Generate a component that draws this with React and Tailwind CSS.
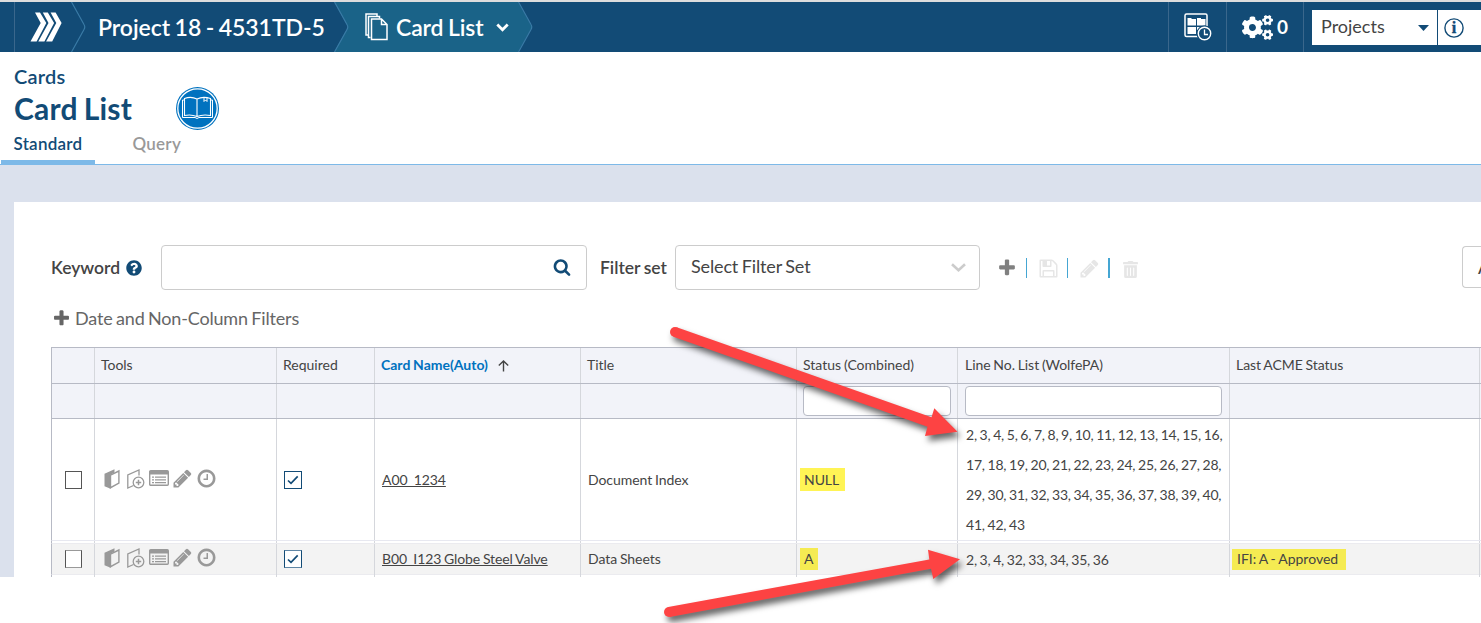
import React, { useState } from 'react';
import { FaCogs, FaQuestionCircle, FaTrashAlt } from 'react-icons/fa';

const COLS = 'grid grid-cols-[43px_182px_98px_206px_216px_161px_272px_250px]';

const ROWS = [
  {
    id: 'A00_1234',
    name: 'A00_1234',
    title: 'Document Index',
    status: 'NULL',
    lines: '2, 3, 4, 5, 6, 7, 8, 9, 10, 11, 12, 13, 14, 15, 16, 17, 18, 19, 20, 21, 22, 23, 24, 25, 26, 27, 28, 29, 30, 31, 32, 33, 34, 35, 36, 37, 38, 39, 40, 41, 42, 43',
    last: '',
  },
  {
    id: 'B00_I123',
    name: 'B00_I123 Globe Steel Valve',
    title: 'Data Sheets',
    status: 'A',
    lines: '2, 3, 4, 32, 33, 34, 35, 36',
    last: 'IFI: A - Approved',
  },
];

const GLYPHS = {
  plus: 'M1600 736v192q0 40-28 68t-68 28h-416v416q0 40-28 68t-68 28h-192q-40 0-68-28t-28-68v-416h-416q-40 0-68-28t-28-68v-192q0-40 28-68t68-28h416v-416q0-40 28-68t68-28h192q40 0 68 28t28 68v416h416q40 0 68 28t28 68z',
  search: 'M1216 832q0-185-131.5-316.5t-316.5-131.5-316.5 131.5-131.5 316.5 131.5 316.5 316.5 131.5 316.5-131.5 131.5-316.5zm512 832q0 52-38 90t-90 38q-54 0-90-38l-343-342q-179 124-399 124-143 0-273.5-55.5t-225-150-150-225-55.5-273.5 55.5-273.5 150-225 225-150 273.5-55.5 273.5 55.5 225 150 150 225 55.5 273.5q0 220-124 399l343 343q37 37 37 90z',
  save: 'M512 1536h768v-384h-768v384zm896 0h128v-896q0-14-10-38.5t-20-34.5l-281-281q-10-10-34-20t-39-10v416q0 40-28 68t-68 28h-576q-40 0-68-28t-28-68v-416h-128v1280h128v-416q0-40 28-68t68-28h832q40 0 68 28t28 68v416zm-384-928v-320q0-13-9.5-22.5t-22.5-9.5h-192q-13 0-22.5 9.5t-9.5 22.5v320q0 13 9.5 22.5t22.5 9.5h192q13 0 22.5-9.5t9.5-22.5zm640 32v928q0 40-28 68t-68 28h-1344q-40 0-68-28t-28-68v-1344q0-40 28-68t68-28h928q40 0 88 20t76 48l280 280q28 28 48 76t20 88z',
  pencil: 'M491 1536l91-91-235-235-91 91v107h128v128h107zm523-928q0-22-22-22-10 0-17 7l-542 542q-7 7-7 17 0 22 22 22 10 0 17-7l542-542q7-7 7-17zm-54-192l416 416-832 832h-416v-416zm683 96q0 53-37 90l-166 166-416-416 166-165q36-38 90-38 53 0 91 38l235 234q37 39 37 91z',
  clock: 'M1024 544v448q0 14-9 23t-23 9h-320q-14 0-23-9t-9-23v-64q0-14 9-23t23-9h224v-352q0-14 9-23t23-9h64q14 0 23 9t9 23zm416 352q0-148-73-273t-198-198-273-73-273 73-198 198-73 273 73 273 198 198 273 73 273-73 198-198 73-273zm224 0q0 209-103 385.5t-279.5 279.5-385.5 103-385.5-103-279.5-279.5-103-385.5 103-385.5 279.5-279.5 385.5-103 385.5 103 279.5 279.5 103 385.5z',
};

function Glyph({ name, className }) {
  return (
    <svg viewBox="0 0 1792 1792" fill="currentColor" className={className}>
      <path d={GLYPHS[name]} />
    </svg>
  );
}

// Breadcrumb separator, left/right are the fills on either side of the point
function Crumb({ left, right }) {
  return (
    <svg width="15" height="50" viewBox="0 0 15 50" className="shrink-0">
      <rect width="15" height="50" fill={right} />
      <path d="M0 0L14 25L0 50z" fill={left} />
      <path d="M0.5 0L13 22.5Q14.5 25 13 27.5L0.5 50" fill="none" stroke="#3a7ba6" strokeWidth="1.2" />
    </svg>
  );
}

function TopBar() {
  return (
    <header className="flex h-[50px] shrink-0 bg-[#124b76] text-white">
      <div className="ml-[14px] flex w-[57px] items-center border-l border-[#3a678c] pl-[15px]">
        <svg width="32" height="30" viewBox="0 0 32 30" fill="#fff">
          <path d="M5 0.5h5l6.3 10.5l-9.7 18.5h-6.1l10.2-18.5z" />
          <path d="M12.8 0.5h5l6.3 10.5l-9.7 18.5h-6.1l10.2-18.5z" />
          <path d="M20.6 0.5h5l6 10.5l-9.4 18.5h-6.1l10.2-18.5z" />
        </svg>
      </div>
      <Crumb left="#124b76" right="#124b76" />
      <div className="flex w-[248px] items-center pt-px pl-[12px] text-[23px] font-semibold tracking-[-0.05px] whitespace-nowrap">Project 18 - 4531TD-5</div>
      <Crumb left="#124b76" right="#1a6388" />
      <div className="flex w-[169px] items-center bg-[#1a6388] pl-[16px] text-[23px] font-semibold tracking-[-0.12px] whitespace-nowrap">
        <svg width="23" height="28" viewBox="0 0 23 28" fill="none" stroke="#fff" strokeWidth="1.5" className="shrink-0">
          <path d="M3 22H1V1H12V3M5.500 24.500H3.500V3.500H14.500V5.500" />
          <path d="M6.500 6H16.500L22 11.500V26.500H6.500zM16.500 6V11.500H22" />
        </svg>
        <span className="w-[100px] shrink-0 pt-px pl-[8px]">Card List</span>
        <svg width="13" height="9" viewBox="0 0 13 9" fill="none" stroke="#fff" strokeWidth="2.800" className="ml-[8px] shrink-0">
          <path d="M1.300 1.500L6.500 6.700L11.700 1.500" />
        </svg>
      </div>
      <Crumb left="#1a6388" right="#124b76" />
      <div className="ml-auto flex w-[58px] shrink-0 items-center border-l border-[#3a678c] pl-[15px]">
        <svg width="28" height="28" viewBox="0 0 28 28" fill="none">
          <rect x="1" y="1" width="22" height="22.500" rx="1.500" stroke="#fff" strokeWidth="1.500" />
          <path d="M3.500 5h4v1h4.500v6.500H3.500zM13 5h4v1h4.500v6.500H13zM3.500 14h8.500v7H3.500zM13 14h8.500v3H13z" fill="#fff" />
          <circle cx="20.500" cy="20.500" r="8" fill="#124b76" />
          <circle cx="20.500" cy="20.500" r="6.200" stroke="#fff" strokeWidth="1.400" />
          <path d="M20.500 16.500V21.500H24" stroke="#fff" strokeWidth="1.300" />
        </svg>
      </div>
      <div className="flex w-[77px] shrink-0 items-center border-l border-[#3a678c] pl-[15px] text-[19px] font-bold">
        <FaCogs className="h-[31px] w-[31px]" />
        <span className="ml-[4px] pt-px">0</span>
      </div>
      <div className="flex w-[178px] shrink-0 border-l border-[#3a678c] pt-[8px] pl-[8px]">
        <button className="flex h-[35px] w-[125px] items-center bg-white pl-[9px] text-[18px] text-[#444]">
          <span className="-mt-[2px]">Projects</span>
          <svg width="11" height="6" viewBox="0 0 11 6" fill="#124b76" className="ml-auto mr-[8px]">
            <path d="M0 0H11L5.500 6z" />
          </svg>
        </button>
        <div className="ml-px flex h-[35px] flex-1 items-center bg-white pl-[6px]">
          <svg width="20" height="20" viewBox="0 0 20 20">
            <circle cx="10" cy="10" r="9.100" fill="none" stroke="#124b76" strokeWidth="1.400" />
            <text x="10" y="15" textAnchor="middle" fill="#124b76" stroke="#124b76" strokeWidth="0.400" fontFamily="Liberation Serif, serif" fontWeight="700" fontSize="16">i</text>
          </svg>
        </div>
      </div>
    </header>
  );
}

function PageTitle({ tab, setTab }) {
  return (
    <section className="flex h-[113px] shrink-0 flex-col border-b border-[#7db9e8] bg-white pt-[12px] text-[#124b76]">
      <div className="h-[24px] pl-[14px] text-[20px] leading-[24px] font-semibold tracking-[0.2px]">Cards</div>
      <div className="flex h-[40px] items-center pl-[14px]">
        <h1 className="w-[162px] text-[30px] leading-[36px] font-bold tracking-[0.2px]">Card List</h1>
        <svg width="43" height="43" viewBox="0 0 43 43" fill="none" stroke="#fff" className="shrink-0">
          <circle cx="21.500" cy="21.500" r="21.500" fill="#0072bf" stroke="none" />
          <circle cx="21.500" cy="21.500" r="19.700" strokeWidth="1.300" />
          <path d="M8.500 11.500Q15 9 21 12Q27 9 34.500 11.500V28.500Q27 27 21 29.500Q15 27 8.500 28.500zM21 12V29.500" strokeWidth="1.100" />
          <path d="M8.500 13H6.500V30.500H19L21 31.500L23 30.500H36.500V13H34.500M28 11V14.500L29.500 13L31 14.500V11" strokeWidth="1" />
        </svg>
      </div>
      <nav className="flex h-[36px] pl-px text-[17px] font-semibold tracking-[0.25px]">
        <button
          onClick={() => setTab('standard')}
          className={`w-[94px] border-b-4 pb-[2px] pl-[12.5px] text-left leading-[29px] ${tab === 'standard' ? 'border-[#7db9e8] text-[#124b76]' : 'border-transparent text-[#999]'}`}
        >
          Standard
        </button>
        <button
          onClick={() => setTab('query')}
          className={`ml-[25px] w-[74px] border-b-4 pb-[2px] pl-[12.5px] text-left leading-[29px] ${tab === 'query' ? 'border-[#7db9e8] text-[#124b76]' : 'border-transparent text-[#999]'}`}
        >
          Query
        </button>
      </nav>
    </section>
  );
}

function Toolbar() {
  return (
    <div className="flex h-[45px] items-center text-[18px] whitespace-nowrap text-[#444]">
      <label className="w-[75px] pt-px text-[17.500px] font-semibold">Keyword</label>
      <FaQuestionCircle className="h-[16px] w-[16px] shrink-0 text-[#124b76]" />
      <div className="ml-[19px] flex h-[45px] w-[426px] shrink-0 items-center justify-end rounded border border-[#ccc] pr-[15px] pb-px">
        <Glyph name="search" className="h-[18px] w-[18px] text-[#124b76]" />
      </div>
      <label className="ml-[13px] w-[75px] shrink-0 pt-px text-[17.500px] font-semibold">Filter set</label>
      <button className="flex h-[45px] w-[305px] shrink-0 items-center justify-between rounded border border-[#ccc] pr-[13px] pl-[15px] text-left">
        <span className="-mt-[3px] tracking-[-0.14px]">Select Filter Set</span>
        <svg width="15" height="9" viewBox="0 0 15 9" fill="none" stroke="#ccc" strokeWidth="2.600">
          <path d="M1 1.200L7.500 7.200L14 1.200" />
        </svg>
      </button>
      <Glyph name="plus" className="mt-px ml-[17px] h-[20px] w-[20px] shrink-0 text-[#808080]" />
      <span className="ml-[9px] h-[20px] w-px shrink-0 bg-[#45a6d3]" />
      <Glyph name="save" className="mt-[2px] ml-[11px] h-[21px] w-[21px] shrink-0 text-[#e6e6e6]" />
      <span className="ml-[8px] h-[20px] w-px shrink-0 bg-[#45a6d3]" />
      <Glyph name="pencil" className="mt-[2px] ml-[11px] h-[21px] w-[21px] shrink-0 text-[#e6e6e6]" />
      <span className="ml-[8px] h-[20px] w-[2px] shrink-0 bg-[#45a6d3]" />
      <FaTrashAlt className="mt-[3px] ml-[12px] h-[17px] w-[17px] shrink-0 text-[#e6e6e6]" />
      <button className="-mt-px ml-auto h-[42px] w-[19px] shrink-0 overflow-hidden rounded-l border border-r-0 border-[#ccc] pl-[15px] text-left font-medium">A</button>
    </div>
  );
}

function RowTools({ striped }) {
  return (
    <div className={`flex items-center pl-[9px] text-[#999] ${striped ? '-mt-[4px]' : '-mt-[2px]'}`}>
      <svg width="16" height="20" viewBox="0 0 16 20" fill="none" stroke="currentColor" strokeWidth="1.400">
        <path d="M0.500 4.800L10.500 0.300V3.600L6.600 5.800V19.800L0.500 17.300z" fill="currentColor" stroke="none" />
        <path d="M6.500 6.200L14.900 2V14L6.500 18.700z" />
      </svg>
      <svg width="18" height="20" viewBox="0 0 18 20" fill="none" stroke="currentColor" strokeWidth="1.300" className="ml-[7px]">
        <path d="M6.500 16.500L0.800 19V6L12 1V6.500" />
        <circle cx="11.500" cy="13.500" r="5.300" />
        <path d="M8.800 13.500H14.200M11.500 10.800V16.200" strokeWidth="1.500" />
      </svg>
      <svg width="20" height="16" viewBox="0 0 20 16" className="-mt-[2px] ml-[4px]">
        <rect x="0.700" y="0.700" width="18.600" height="14.600" rx="1" fill="none" stroke="currentColor" strokeWidth="1.400" />
        <path d="M1 1H19V4.500H1zM3 6.500h2v1.200H3zM6 6.500h11v1.200H6zM3 9.200h2v1.200H3zM6 9.200h11v1.200H6zM3 12h2v1.200H3zM6 12h11v1.200H6z" fill="currentColor" />
      </svg>
      <Glyph name="pencil" className="ml-[3px] h-[21px] w-[21px]" />
      <Glyph name="clock" className="-mt-px ml-[3px] h-[21px] w-[21px]" />
    </div>
  );
}

function Cell({ className = '', children }) {
  return <div className={`flex items-center border-r border-[#d5d7dc] ${className}`}>{children}</div>;
}

function CardRow({ row, striped }) {
  const nudge = striped ? 'pb-[2px]' : '';

  return (
    <div
      className={`${COLS} border-l border-l-[#b7bac5] ${striped ? 'h-[32px] border-y border-y-[#ebebef] bg-[#f3f3f3]' : 'h-[122px] border-b border-b-[#e7e8f0] bg-white'}`}
    >
      <Cell className={`pl-[13px] ${nudge}`}>
        <span className={`h-[18px] w-[17px] border bg-white ${striped ? 'border-x-[#555] border-y-[#999]' : 'border-[#555]'}`} />
      </Cell>
      <Cell><RowTools striped={striped} /></Cell>
      <Cell className={`pl-[7px] ${nudge}`}>
        <span className={`flex h-[18px] w-[18px] items-center justify-center border bg-white ${striped ? 'border-x-[#124b76] border-y-[#5f86a5]' : 'border-[#124b76]'}`}>
          <svg width="12" height="10" viewBox="0 0 12 10" fill="none" stroke="#124b76" strokeWidth="1.700">
            <path d="M1 5.500L4 8.300L10.700 1.300" />
          </svg>
        </span>
      </Cell>
      <Cell className={`pl-[7px] ${nudge}`}><a className="tracking-[-0.1px] underline">{row.name}</a></Cell>
      <Cell className={`pl-[7px] ${nudge}`}>{row.title}</Cell>
      <Cell className={`pl-[3px] ${nudge}`}>
        <span className={`pl-[4px] ${striped ? 'h-[22px] w-[18px] bg-[#f5eb52] leading-[22px]' : 'h-[23px] w-[45px] bg-[#fff455] leading-[23px]'}`}>{row.status}</span>
      </Cell>
      <Cell className="pl-[8px]"><span className="w-[262px] pt-px leading-[30px] tracking-[-0.2px]">{row.lines}</span></Cell>
      <Cell className="pl-[2px]">
        {row.last && <span className="h-[21px] w-[114px] bg-[#f5eb52] pl-[5px] leading-[20px] tracking-normal">{row.last}</span>}
      </Cell>
    </div>
  );
}

function RowGap() {
  return (
    <div className={`${COLS} h-[2px] border-l border-[#b7bac5]`}>
      <Cell /><Cell /><Cell /><Cell /><Cell /><Cell /><Cell /><Cell />
    </div>
  );
}

function CardTable() {
  return (
    <div className="w-[1430px] text-[14px] tracking-[-0.06px] whitespace-nowrap text-[#444] [&_span]:whitespace-normal">
      <div className={`${COLS} h-[37px] border-y border-l border-[#b7bac5] bg-[#f2f3f9]`}>
        <Cell />
        <Cell className="pb-[2px] pl-[6px]">Tools</Cell>
        <Cell className="pb-[2px] pl-[6px] tracking-normal">Required</Cell>
        <Cell className="pb-[2px] pl-[6px] font-bold tracking-normal text-[#0072bf]">
          Card Name(Auto)
          <svg width="11" height="12" viewBox="0 0 11 12" fill="none" stroke="#444" strokeWidth="1.400" className="mt-[2px] ml-[10px]">
            <path d="M5.500 11.500V1M0.800 5.500L5.500 1L10.200 5.500" />
          </svg>
        </Cell>
        <Cell className="pb-[2px] pl-[6px]">Title</Cell>
        <Cell className="pb-[2px] pl-[6px] tracking-normal">Status (Combined)</Cell>
        <Cell className="pb-[2px] pl-[7px]">Line No. List (WolfePA)</Cell>
        <Cell className="pb-[2px] pl-[6px]">Last ACME Status</Cell>
      </div>
      <div className={`${COLS} h-[35px] border-b border-l border-[#b7bac5] bg-[#f2f3f9]`}>
        <Cell /><Cell /><Cell /><Cell /><Cell />
        <Cell className="pl-[6px]">
          <input className="h-[30px] w-[148px] rounded border border-[#b7bac5] bg-white" />
        </Cell>
        <Cell className="pl-[7px]">
          <input className="h-[30px] w-[257px] rounded border border-[#b7bac5] bg-white" />
        </Cell>
        <Cell />
      </div>
      <CardRow row={ROWS[0]} />
      <RowGap />
      <CardRow row={ROWS[1]} striped />
      <RowGap />
    </div>
  );
}

// Callout arrows drawn over the grid
function Arrows() {
  return (
    <svg width="1481" height="623" viewBox="0 0 1481 623" className="pointer-events-none absolute inset-0 drop-shadow-[3px_5px_3px_rgba(0,0,0,0.6)]" fill="#fd4343">
      <circle cx="675" cy="332" r="5" />
      <path d="M676.7 327.300L931.500 417.300L934.300 408.300L957.500 431.700L925 436L927.500 426.700L673.300 336.700z" />
      <circle cx="669" cy="612" r="5" />
      <path d="M668.200 607L929.300 559.500L928 549.800L960 559.300L933.300 579L931 568.700L669.800 617z" />
    </svg>
  );
}

export default function App() {
  const [tab, setTab] = useState('standard');

  return (
    <div className="relative flex h-[623px] w-[1481px] flex-col overflow-hidden bg-white pt-[2px] font-['Lato',sans-serif] before:absolute before:inset-x-0 before:top-0 before:h-[2px] before:bg-[#ddd] [&_*]:[word-spacing:-0.05em]">
      <TopBar />
      <PageTitle tab={tab} setTab={setTab} />
      <main className="h-[412px] shrink-0 overflow-hidden bg-[#dbe1ed] pt-[37px] pl-[14px]">
        <div className="h-[375px] bg-white pt-[43px] pl-[37px]">
          <Toolbar />
          <button className="flex h-[57px] items-center text-[18px] tracking-[-0.18px] text-[#666]">
            <Glyph name="plus" className="mr-[4px] ml-[1px] h-[19px] w-[19px]" />
            Date and Non-Column Filters
          </button>
          <CardTable />
        </div>
      </main>
      <Arrows />
    </div>
  );
}
